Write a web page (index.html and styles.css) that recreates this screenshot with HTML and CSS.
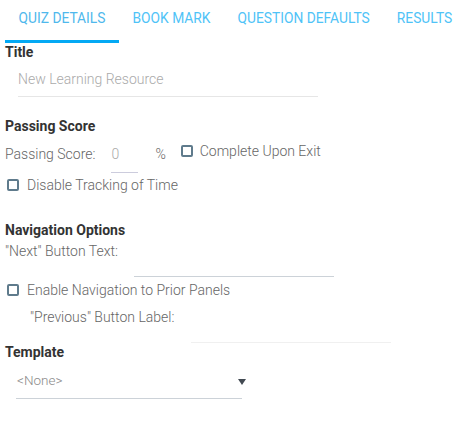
FILE: index.html
```html
<!DOCTYPE html>
<html>
<head>
<meta charset="utf-8">
<link rel="stylesheet" href="styles.css">
</head>
<body>
<div class="page">
  <div class="tabs">
    <div class="tab active">QUIZ DETAILS</div>
    <div class="tab">BOOK MARK</div>
    <div class="tab">QUESTION DEFAULTS</div>
    <div class="tab">RESULTS</div>
  </div>

  <div class="section s-title">
    <div class="heading">Title</div>
    <div class="field title-field"><span class="placeholder">New Learning Resource</span></div>
  </div>

  <div class="section s-pass">
    <div class="heading">Passing Score</div>
    <div class="row pass-row">
      <span class="label">Passing Score:</span>
      <span class="field score-field"><span class="placeholder">0</span></span>
      <span class="label pct">%</span>
      <span class="check"><span class="box"></span><span class="label">Complete Upon Exit</span></span>
    </div>
    <div class="check check-line track"><span class="box"></span><span class="label">Disable Tracking of Time</span></div>
  </div>

  <div class="section s-nav">
    <div class="heading">Navigation Options</div>
    <div class="label next-label">"Next" Button Text:</div>
    <div class="field next-field"></div>
    <div class="check check-line prior"><span class="box"></span><span class="label">Enable Navigation to Prior Panels</span></div>
    <div class="label prev-label">"Previous" Button Label:</div>
    <div class="field prev-field"></div>
  </div>

  <div class="section s-tpl">
    <div class="heading">Template</div>
    <div class="select"><span class="placeholder">&lt;None&gt;</span><span class="arrow"></span></div>
  </div>
</div>
</body>
</html>
```

FILE: styles.css
```css
html, body {
  margin: 0;
  padding: 0;
  background: #fff;
}
body {
  font-family: Roboto, "Liberation Sans", sans-serif;
  font-weight: 300;
  font-size: 14px;
  color: #555;
}
.page {
  padding: 0 5px;
}
.tabs {
  display: flex;
  height: 43px;
}
.tab {
  flex-shrink: 0;
  white-space: nowrap;
  padding: 0 13.5px;
  height: 40px;
  line-height: 37px;
  font-size: 13.8px;
  font-weight: 400;
  color: #4fc3f7;
  border-bottom: 3px solid transparent;
  box-sizing: content-box;
}
.tab.active {
  border-bottom-color: #03a9f4;
  color: #4fb8ec;
}
.heading {
  font-weight: 700;
  font-size: 14px;
  color: #333;
  line-height: 18px;
}
.label {
  color: #666;
  line-height: 18px;
  white-space: nowrap;
}
.placeholder {
  color: #aaa;
}
.field {
  border-bottom: 1px solid #e6e6e6;
}
.s-title {
  margin-top: 0;
}
.title-field {
  margin-left: 13px;
  width: 300px;
  height: 36px;
  line-height: 36px;
  box-sizing: border-box;
}
.s-pass {
  margin-top: 20px;
}
.pass-row {
  display: flex;
  align-items: flex-start;
  margin-top: 10px;
  height: 31px;
}
.score-field {
  margin-left: 16px;
  width: 27px;
  height: 27px;
  line-height: 18px;
  border-bottom-color: #ccd;
}
.pct {
  margin-left: 17px;
}
.pass-row .check {
  margin-left: 15px;
  margin-top: -3px;
}
.check {
  display: flex;
  align-items: center;
}
.box {
  width: 8px;
  height: 8px;
  border: 2px solid #5f7b8c;
  border-radius: 2px;
  margin-right: 7px;
}
.check-line {
  margin-left: 2px;
}
.check-line .box {
  margin-right: 8px;
}
.s-nav {
  margin-top: 27px;
}
.next-label {
  margin-top: 3px;
}
.next-field {
  margin-left: 129px;
  width: 200px;
  height: 16px;
  border-bottom-color: #ccd2d8;
}
.prior {
  margin-top: 4px;
}
.prev-label {
  margin-left: 25px;
  margin-top: 9px;
}
.prev-field {
  margin-left: 186px;
  width: 200px;
  height: 16px;
  border-bottom-color: #f0f0f0;
}
.s-tpl {
  margin-top: 0;
}
.select {
  margin-left: 11px;
  width: 226px;
  height: 38px;
  border-bottom: 1px solid #ccd2d8;
  display: flex;
  align-items: center;
  justify-content: space-between;
  box-sizing: border-box;
  padding-left: 1px;
  padding-right: 0;
}
.select .placeholder {
  color: #8a8a8a;
  font-size: 13.5px;
}
.arrow {
  width: 0;
  height: 0;
  border-left: 4px solid transparent;
  border-right: 4px solid transparent;
  border-top: 6px solid #424a52;
  margin-top: 5px;
  margin-right: -4px;
}
```
